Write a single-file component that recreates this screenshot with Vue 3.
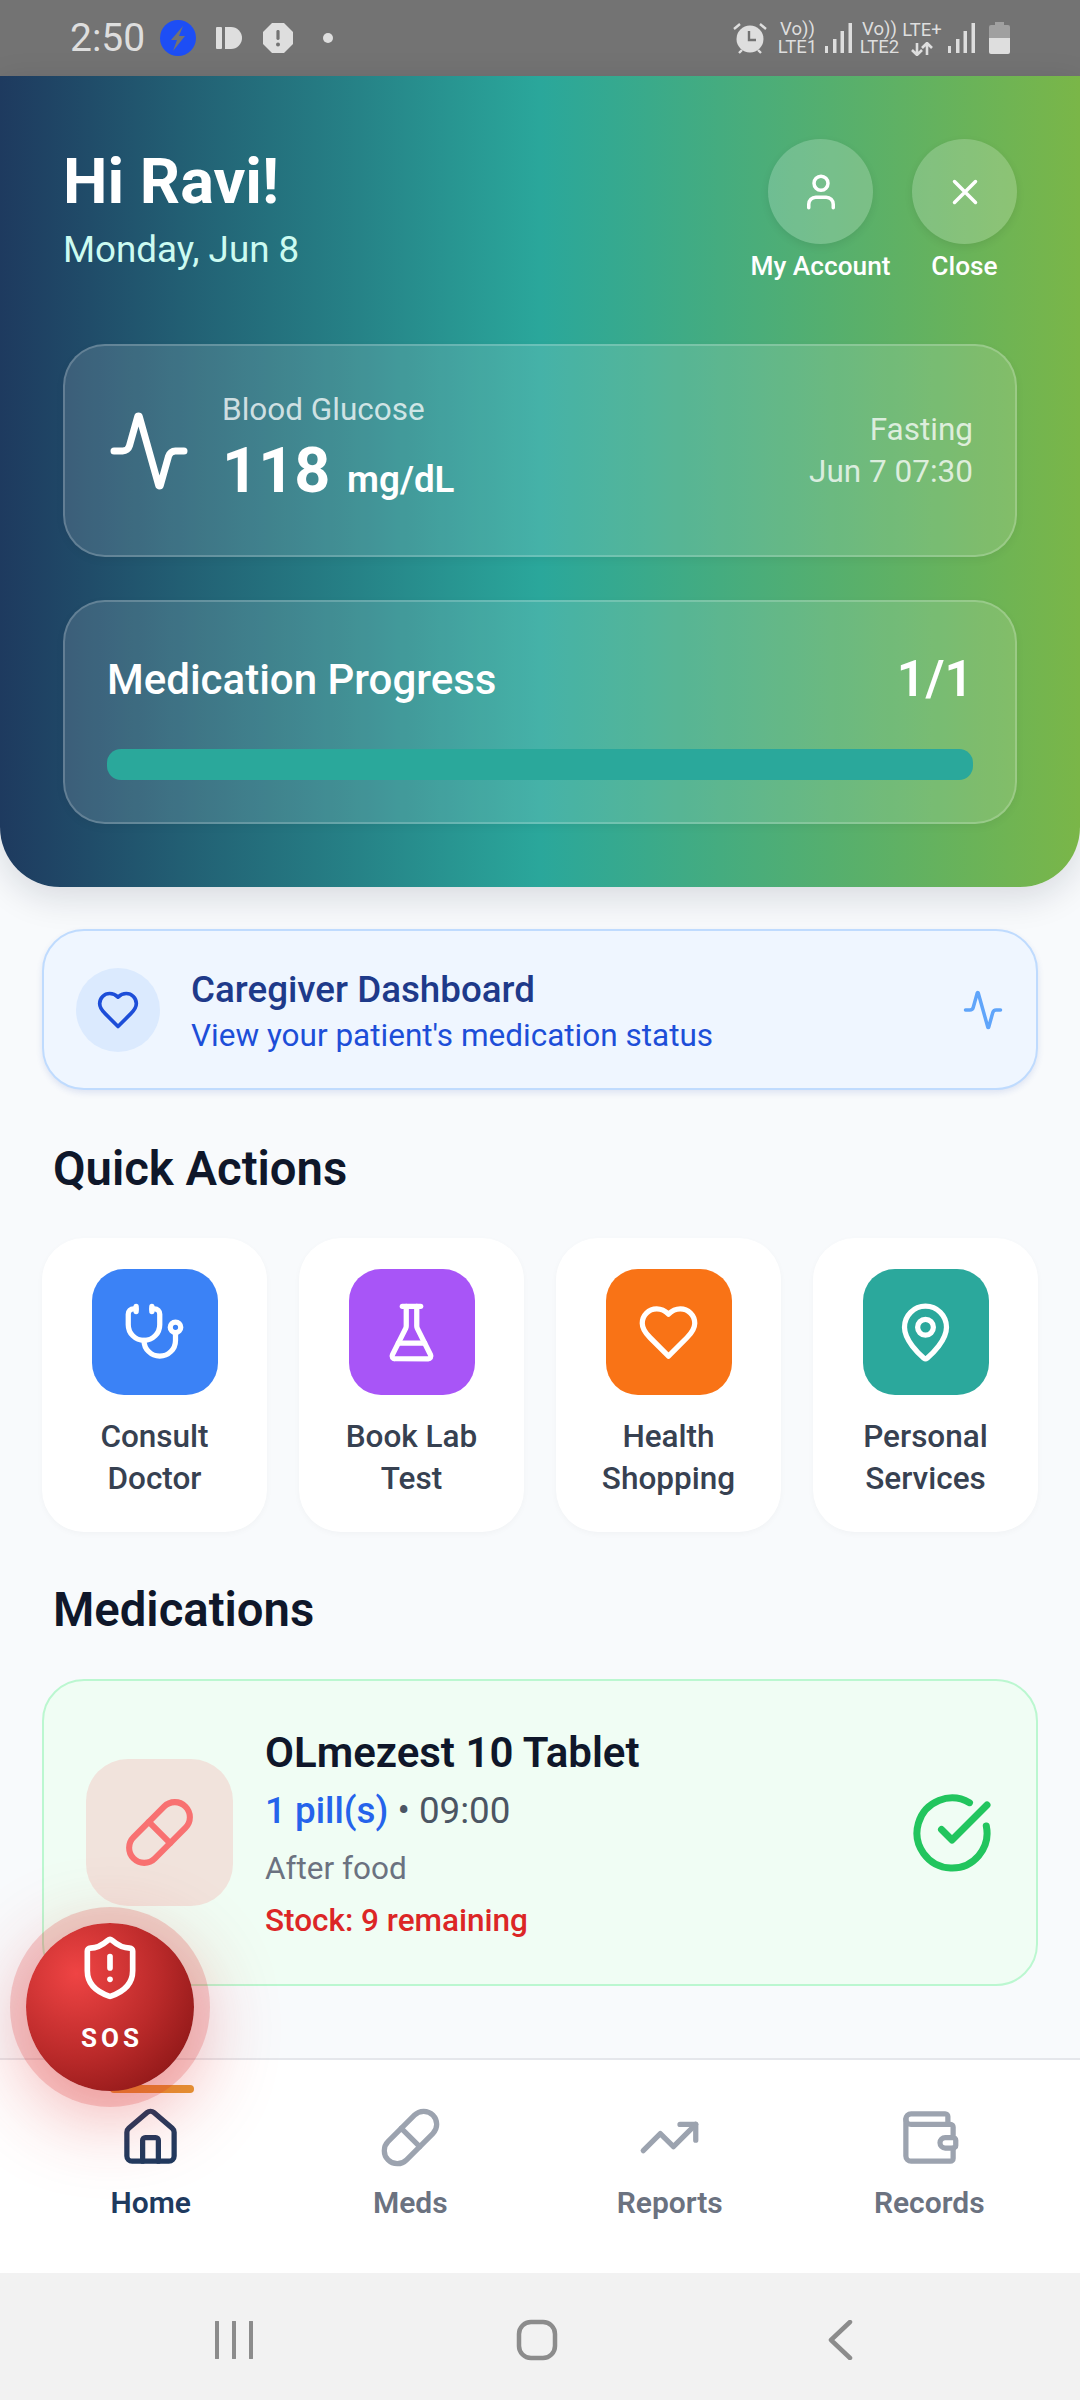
<template>
  <div class="screen">
    <div class="status">
      <div class="status-left">
        <span class="time">2:50</span>
        <svg class="st-bolt" viewBox="0 0 36 36">
          <circle cx="18" cy="18" r="18" fill="#1d4ef5" />
          <path d="M23 6 11 20h6l-4 11 12-15h-6z" fill="#737373" />
        </svg>
        <svg class="st-id" viewBox="0 0 26 22">
          <rect x="0" y="0" width="6" height="22" rx="1" fill="#dedede" />
          <path d="M9 0h6a11 11 0 0 1 0 22H9z" fill="#dedede" />
        </svg>
        <svg class="st-warn" viewBox="0 0 30 30">
          <path d="M9 0h12l9 9v12l-9 9H9l-9-9V9z" fill="#dedede" />
          <rect x="13.4" y="7" width="3.2" height="10" rx="1.4" fill="#737373" />
          <circle cx="15" cy="21.5" r="2" fill="#737373" />
        </svg>
        <span class="st-dot"></span>
      </div>
      <div class="status-right">
        <svg class="st-alarm" viewBox="0 0 34 32">
          <circle cx="17" cy="17" r="13.5" fill="#dedede" />
          <path d="M16 9v9h7" fill="none" stroke="#737373" stroke-width="2.4" />
          <path d="M1 7l6-5M33 7l-6-5M6 31l3-3M28 31l-3-3" stroke="#dedede" stroke-width="2.4" />
        </svg>
        <div class="st-net st-net1">
          <span>Vo))</span>
          <span>LTE1</span>
        </div>
        <svg class="st-signal" viewBox="0 0 27 30">
          <rect x="0" y="23" width="3" height="7" fill="#dedede" />
          <rect x="8" y="16" width="3.5" height="14" fill="#dedede" />
          <rect x="15.5" y="8" width="3.5" height="22" fill="#dedede" />
          <rect x="23.5" y="0" width="3.5" height="30" fill="#dedede" />
        </svg>
        <div class="st-net st-net2">
          <span>Vo))</span>
          <span>LTE2</span>
        </div>
        <div class="st-net st-plus">
          <span>LTE+</span>
          <svg viewBox="0 0 24 14" width="24" height="14">
            <path d="M7 1v11M2 8l5 5 5-5M17 13V2M12 6l5-5 5 5" fill="none" stroke="#dedede" stroke-width="2.6" />
          </svg>
        </div>
        <svg class="st-signal st-signal2" viewBox="0 0 27 30">
          <rect x="0" y="23" width="3" height="7" fill="#dedede" />
          <rect x="8" y="16" width="3.5" height="14" fill="#dedede" />
          <rect x="15.5" y="8" width="3.5" height="22" fill="#dedede" />
          <rect x="23.5" y="0" width="3.5" height="30" fill="#dedede" />
        </svg>
        <svg class="st-batt" viewBox="0 0 21 32">
          <path d="M6 0h9v3h4a2 2 0 0 1 2 2v11H0V5a2 2 0 0 1 2-2h4z" fill="#a0a0a0" />
          <path d="M0 16h21v14a2 2 0 0 1-2 2H2a2 2 0 0 1-2-2z" fill="#dedede" />
        </svg>
      </div>
    </div>

    <header class="hero">
      <div class="hero-top">
        <div>
          <h1 class="hi">Hi Ravi!</h1>
          <p class="date">Monday, Jun 8</p>
        </div>
        <div class="hero-btns">
          <div class="round-wrap">
            <div class="round">
              <svg class="ic" width="42" height="42" viewBox="0 0 24 24">
                <path d="M19 21v-2a4 4 0 0 0-4-4H9a4 4 0 0 0-4 4v2" />
                <circle cx="12" cy="7" r="4" />
              </svg>
            </div>
            <span>My Account</span>
          </div>
          <div class="round-wrap">
            <div class="round">
              <svg class="ic" width="42" height="42" viewBox="0 0 24 24">
                <path d="M18 6 6 18M6 6l12 12" />
              </svg>
            </div>
            <span>Close</span>
          </div>
        </div>
      </div>

      <div class="glass glucose">
        <svg class="ic glucose-ic" width="84" height="84" viewBox="0 0 24 24">
          <path :d="activityPath" />
        </svg>
        <div class="glucose-main">
          <div class="glucose-label">Blood Glucose</div>
          <div class="glucose-val">118 <small>mg/dL</small></div>
        </div>
        <div class="glucose-side">
          <div>Fasting</div>
          <div>Jun 7 07:30</div>
        </div>
      </div>

      <div class="glass progress">
        <div class="progress-row">
          <span>Medication Progress</span>
          <strong>1/1</strong>
        </div>
        <div class="bar"></div>
      </div>
    </header>

    <main class="content">
      <div class="care">
        <div class="care-ic">
          <svg class="ic" width="44" height="44" viewBox="0 0 24 24">
            <path :d="heartPath" />
          </svg>
        </div>
        <div class="care-text">
          <div class="care-title">Caregiver Dashboard</div>
          <div class="care-sub">View your patient's medication status</div>
        </div>
        <svg class="ic care-pulse" width="42" height="42" viewBox="0 0 24 24">
          <path :d="activityPath" />
        </svg>
      </div>

      <h2 class="heading quick-h">Quick Actions</h2>
      <div class="actions">
        <div v-for="a in actions" :key="a.line1" class="action">
          <div class="action-ic" :style="{ background: a.color }">
            <svg class="ic" width="63" height="63" viewBox="0 0 24 24">
              <path v-for="d in a.paths" :key="d" :d="d" />
              <circle v-if="a.circle" :cx="a.circle[0]" :cy="a.circle[1]" :r="a.circle[2]" />
            </svg>
          </div>
          <div class="action-label">{{ a.line1 }}<br />{{ a.line2 }}</div>
        </div>
      </div>

      <h2 class="heading meds-h">Medications</h2>
      <div class="med">
        <div class="med-ic">
          <svg class="ic" width="73" height="73" viewBox="0 0 24 24">
            <path v-for="d in pillPaths" :key="d" :d="d" />
          </svg>
        </div>
        <div class="med-text">
          <div class="med-name">OLmezest 10 Tablet</div>
          <div class="med-dose"><span>1 pill(s)</span> • 09:00</div>
          <div class="med-note">After food</div>
          <div class="med-stock">Stock: 9 remaining</div>
        </div>
        <svg class="ic med-check" width="84" height="84" viewBox="0 0 24 24">
          <path d="M21.801 10A10 10 0 1 1 17 3.335" />
          <path d="m9 11 3 3L22 4" />
        </svg>
      </div>
    </main>

    <nav class="nav">
      <div v-for="(n, i) in navItems" :key="n.label" class="nav-item" :class="{ active: i === 0 }">
        <span v-if="i === 0" class="nav-mark"></span>
        <svg class="ic" width="63" height="63" viewBox="0 0 24 24">
          <path v-for="d in n.paths" :key="d" :d="d" />
        </svg>
        <span class="nav-label">{{ n.label }}</span>
      </div>
    </nav>

    <div class="sysbar">
      <svg width="38" height="38" viewBox="0 0 38 38">
        <path d="M2 1v36M19 1v36M36 1v36" fill="none" stroke="#8c8c8c" stroke-width="4" stroke-linecap="round" />
      </svg>
      <svg width="42" height="42" viewBox="0 0 42 42">
        <rect x="3" y="3" width="36" height="36" rx="12" fill="none" stroke="#8c8c8c" stroke-width="4.5" />
      </svg>
      <svg width="26" height="40" viewBox="0 0 26 40">
        <path d="M23 2 4 20l19 18" fill="none" stroke="#8c8c8c" stroke-width="4.5" stroke-linecap="round" stroke-linejoin="round" />
      </svg>
    </div>

    <div class="sos">
      <svg class="ic" width="68" height="68" viewBox="0 0 24 24">
        <path d="M20 13c0 5-3.5 7.5-7.66 8.95a1 1 0 0 1-.67-.01C7.5 20.5 4 18 4 13V6a1 1 0 0 1 1-1c2 0 4.5-1.2 6.24-2.72a1.17 1.17 0 0 1 1.52 0C14.51 3.81 17 5 19 5a1 1 0 0 1 1 1z" />
        <path d="M12 8v4" />
        <path d="M12 16h.01" />
      </svg>
      <span>SOS</span>
    </div>
  </div>
</template>

<script setup>
const activityPath = 'M22 12h-2.48a2 2 0 0 0-1.93 1.46l-2.35 8.36a.25.25 0 0 1-.48 0L9.24 2.18a.25.25 0 0 0-.48 0l-2.35 8.36A2 2 0 0 1 4.49 12H2'
const heartPath = 'M19 14c1.49-1.46 3-3.21 3-5.5A5.5 5.5 0 0 0 16.5 3c-1.76 0-3 .5-4.5 2-1.5-1.5-2.74-2-4.5-2A5.5 5.5 0 0 0 2 8.5c0 2.3 1.5 4.05 3 5.5l7 7Z'
const pillPaths = [
  'm10.5 20.5 10-10a4.95 4.95 0 1 0-7-7l-10 10a4.95 4.95 0 1 0 7 7Z',
  'm8.5 8.5 7 7'
]

const actions = [
  {
    line1: 'Consult',
    line2: 'Doctor',
    color: '#3b82f6',
    paths: [
      'M11 2v2',
      'M5 2v2',
      'M5 3H4a2 2 0 0 0-2 2v4a6 6 0 0 0 12 0V5a2 2 0 0 0-2-2h-1',
      'M8 15a6 6 0 0 0 12 0v-3'
    ],
    circle: [20, 10, 2]
  },
  {
    line1: 'Book Lab',
    line2: 'Test',
    color: '#a855f7',
    paths: [
      'M10 2v7.527a2 2 0 0 1-.211.896L4.72 20.55a1 1 0 0 0 .9 1.45h12.76a1 1 0 0 0 .9-1.45l-5.069-10.127A2 2 0 0 1 14 9.527V2',
      'M8.5 2h7',
      'M7 16h10'
    ]
  },
  {
    line1: 'Health',
    line2: 'Shopping',
    color: '#f97316',
    paths: [heartPath]
  },
  {
    line1: 'Personal',
    line2: 'Services',
    color: '#2ba89c',
    paths: ['M20 10c0 4.993-5.539 10.193-7.399 11.799a1 1 0 0 1-1.202 0C9.539 20.193 4 14.993 4 10a8 8 0 0 1 16 0'],
    circle: [12, 10, 3]
  }
]

const navItems = [
  {
    label: 'Home',
    paths: [
      'M15 21v-8a1 1 0 0 0-1-1h-4a1 1 0 0 0-1 1v8',
      'M3 10a2 2 0 0 1 .709-1.528l7-5.999a2 2 0 0 1 2.582 0l7 5.999A2 2 0 0 1 21 10v9a2 2 0 0 1-2 2H5a2 2 0 0 1-2-2z'
    ]
  },
  { label: 'Meds', paths: pillPaths },
  { label: 'Reports', paths: ['M22 7 13.5 15.5l-5-5L2 17', 'M16 7h6v6'] },
  {
    label: 'Records',
    paths: [
      'M19 7V4a1 1 0 0 0-1-1H5a2 2 0 0 0 0 4h15a1 1 0 0 1 1 1v4h-3a2 2 0 0 0 0 4h3a1 1 0 0 0 1-1v-2a1 1 0 0 0-1-1',
      'M3 5v14a2 2 0 0 0 2 2h15a1 1 0 0 0 1-1v-4'
    ]
  }
]
</script>

<style>
html, body {
  margin: 0;
  background: #f8fafc;
}
</style>

<style scoped>
.screen {
  position: relative;
  width: 1080px;
  height: 2400px;
  overflow: hidden;
  display: flex;
  flex-direction: column;
  background: #f8fafc;
  font-family: Roboto, "Noto Sans", sans-serif;
}
.ic {
  display: block;
  flex: none;
  fill: none;
  stroke: currentColor;
  stroke-width: 2;
  stroke-linecap: round;
  stroke-linejoin: round;
}

.status {
  height: 76px;
  flex: none;
  background: #737373;
  display: flex;
  justify-content: space-between;
  align-items: center;
  padding: 0 70px 0 70px;
  color: #dedede;
}
.status-left {
  display: flex;
  align-items: center;
}
.time {
  font-size: 39px;
  line-height: 44px;
  width: 90px;
}
.st-bolt {
  width: 36px;
  height: 36px;
  margin-right: 20px;
}
.st-id {
  width: 26px;
  height: 22px;
  margin-right: 21px;
}
.st-warn {
  width: 30px;
  height: 30px;
  margin-right: 30px;
}
.st-dot {
  width: 10px;
  height: 10px;
  border-radius: 50%;
  background: #dedede;
}
.status-right {
  display: flex;
  align-items: center;
}
.st-alarm {
  width: 34px;
  height: 32px;
  margin-right: 11px;
}
.st-net {
  display: flex;
  flex-direction: column;
  align-items: center;
  font-size: 18.5px;
  line-height: 18px;
  white-space: nowrap;
}
.st-net1 {
  width: 39px;
  margin-right: 8px;
}
.st-signal {
  width: 27px;
  height: 30px;
  margin-right: 7px;
}
.st-net2 {
  width: 41px;
  margin-right: 4px;
}
.st-plus {
  width: 36px;
  margin-right: 8px;
}
.st-plus svg {
  display: block;
  margin-top: 3px;
}
.st-signal2 {
  margin-right: 14px;
}
.st-batt {
  width: 21px;
  height: 32px;
}

.hero {
  height: 811px;
  flex: none;
  box-sizing: border-box;
  padding: 63px 63px 0;
  background: linear-gradient(90deg, #1e3a5f 0%, #2aa79b 50%, #7ab648 100%);
  border-radius: 0 0 60px 60px;
  box-shadow: 0 10px 36px rgba(15, 23, 42, 0.14);
  color: #fff;
}
.hero-top {
  height: 205px;
  display: flex;
  justify-content: space-between;
}
.hi {
  margin: 7px 0 0;
  font-size: 63px;
  line-height: 72px;
  font-weight: 700;
}
.date {
  margin: 9px 0 0;
  font-size: 36.75px;
  line-height: 46px;
  color: #ccfbf1;
}
.hero-btns {
  display: flex;
  gap: 39px;
}
.round-wrap {
  width: 105px;
  display: flex;
  flex-direction: column;
  align-items: center;
}
.round-wrap span {
  margin-top: 6px;
  font-size: 26.25px;
  line-height: 32px;
  font-weight: 500;
  white-space: nowrap;
}
.round {
  width: 105px;
  height: 105px;
  border-radius: 50%;
  background: rgba(255, 255, 255, 0.2);
  box-shadow: 0 3px 8px rgba(0, 0, 0, 0.08);
  display: flex;
  align-items: center;
  justify-content: center;
}

.glass {
  box-sizing: border-box;
  border: 2px solid rgba(255, 255, 255, 0.2);
  background: rgba(255, 255, 255, 0.13);
  border-radius: 42px;
  box-shadow: 0 3px 8px rgba(0, 0, 0, 0.05);
}
.glucose {
  height: 213px;
  display: flex;
  padding: 0 42px;
}
.glucose-ic {
  margin: 63px 0 0 0;
}
.glucose-main {
  margin-left: 31px;
  padding-top: 42px;
}
.glucose-label {
  font-size: 31.5px;
  line-height: 44px;
  color: rgba(255, 255, 255, 0.75);
}
.glucose-val {
  margin-top: 3px;
  font-size: 63px;
  line-height: 72px;
  font-weight: 700;
  white-space: nowrap;
}
.glucose-val small {
  margin-left: 1px;
  font-size: 36.75px;
  font-weight: 600;
}
.glucose-side {
  margin-left: auto;
  padding-top: 63px;
  text-align: right;
  font-size: 31.5px;
  line-height: 42px;
  color: rgba(255, 255, 255, 0.75);
}
.progress {
  height: 224px;
  margin-top: 43px;
  padding: 0 42px;
}
.progress-row {
  display: flex;
  justify-content: space-between;
  align-items: center;
  height: 60px;
  margin-top: 47px;
  font-size: 42px;
  font-weight: 500;
}
.progress-row strong {
  font-size: 50px;
  font-weight: 600;
}
.bar {
  height: 31px;
  margin-top: 40px;
  border-radius: 14px;
  background: #2aa89b;
}

.content {
  flex: 1;
  padding: 42px 42px 0;
  min-height: 0;
}
.care {
  box-sizing: border-box;
  height: 161px;
  display: flex;
  align-items: center;
  padding: 0 32px 0 32px;
  background: #eff6ff;
  border: 2px solid #bfdbfe;
  border-radius: 42px;
  box-shadow: 0 3px 6px rgba(30, 64, 175, 0.12);
}
.care-ic {
  width: 84px;
  height: 84px;
  flex: none;
  border-radius: 50%;
  background: #dbeafe;
  color: #1d4ed8;
  display: flex;
  align-items: center;
  justify-content: center;
}
.care-text {
  margin-left: 31px;
  flex: 1;
}
.care-title {
  font-size: 36.75px;
  line-height: 50px;
  font-weight: 500;
  color: #1e3a8a;
  padding-top: 3px;
}
.care-sub {
  font-size: 31.5px;
  line-height: 42px;
  color: #1d4ed8;
}
.care-pulse {
  color: #60a5fa;
}

.heading {
  margin: 0;
  padding-left: 11px;
  font-size: 47.25px;
  line-height: 63px;
  font-weight: 600;
  color: #0f172a;
}
.quick-h {
  margin-top: 48px;
}
.actions {
  margin-top: 37px;
  display: grid;
  grid-template-columns: repeat(4, 1fr);
  gap: 32px;
}
.action {
  box-sizing: border-box;
  height: 294px;
  padding-top: 31px;
  background: #fff;
  border-radius: 42px;
  box-shadow: 0 2px 6px rgba(15, 23, 42, 0.03);
  display: flex;
  flex-direction: column;
  align-items: center;
}
.action-ic {
  width: 126px;
  height: 126px;
  border-radius: 32px;
  color: #fff;
  display: flex;
  align-items: center;
  justify-content: center;
}
.action-label {
  margin-top: 21px;
  font-size: 31.5px;
  line-height: 42px;
  font-weight: 500;
  text-align: center;
  color: #374151;
}
.meds-h {
  margin-top: 47px;
}
.med {
  box-sizing: border-box;
  height: 307px;
  margin-top: 37px;
  display: flex;
  align-items: center;
  padding: 0 42px 0 42px;
  background: #f0fdf4;
  border: 2px solid #bbf7d0;
  border-radius: 42px;
}
.med-ic {
  width: 147px;
  height: 147px;
  flex: none;
  border-radius: 42px;
  background: rgba(248, 113, 113, 0.18);
  color: #f87171;
  display: flex;
  align-items: center;
  justify-content: center;
}
.med-text {
  flex: 1;
  margin-left: 32px;
  padding-top: 3px;
}
.med-name {
  font-size: 42px;
  line-height: 55px;
  font-weight: 600;
  color: #0f172a;
}
.med-dose {
  margin-top: 6px;
  font-size: 36.75px;
  line-height: 50px;
  color: #4b5563;
}
.med-dose span {
  color: #2563eb;
  font-weight: 500;
}
.med-note {
  margin-top: 11px;
  font-size: 31.5px;
  line-height: 44px;
  color: #6b7280;
}
.med-stock {
  margin-top: 8px;
  font-size: 31.5px;
  line-height: 44px;
  font-weight: 500;
  color: #dc2626;
}
.med-check {
  color: #22c55e;
}

.nav {
  position: relative;
  height: 215px;
  flex: none;
  box-sizing: border-box;
  padding: 0 21px;
  background: #fff;
  border-top: 2px solid #e5e7eb;
  display: grid;
  grid-template-columns: repeat(4, 1fr);
}
.nav-item {
  position: relative;
  display: flex;
  flex-direction: column;
  align-items: center;
  padding-top: 46px;
  color: #9ca3af;
}
.nav-item.active {
  color: #1e3a5f;
}
.nav-mark {
  position: absolute;
  top: 25px;
  left: 89px;
  width: 84px;
  height: 8px;
  border-radius: 4px;
  background: #e59a34;
}
.nav-label {
  margin-top: 14px;
  font-size: 30px;
  line-height: 40px;
  font-weight: 600;
  color: #6b7280;
}
.nav-item.active .nav-label {
  color: #1e3a5f;
}
.sysbar {
  height: 127px;
  flex: none;
  box-sizing: border-box;
  background: #f2f2f2;
  display: grid;
  grid-template-columns: repeat(3, 1fr);
  justify-items: center;
  align-items: center;
  padding: 6px 89px 0 82px;
}

.sos {
  position: absolute;
  left: 26px;
  top: 1923px;
  width: 168px;
  height: 168px;
  border-radius: 50%;
  background: radial-gradient(circle at 30% 30%, #ef4444 0%, #bb2a2a 50%, #7a0f0f 100%);
  box-shadow: 0 0 0 16px rgba(220, 38, 38, 0.2), 0 21px 84px rgba(220, 38, 38, 0.42);
  color: #fff;
  display: flex;
  flex-direction: column;
  align-items: center;
  padding-top: 11px;
  box-sizing: border-box;
}
.sos span {
  margin-top: 21px;
  font-size: 26px;
  line-height: 30px;
  font-weight: 700;
  letter-spacing: 4px;
  margin-right: -4px;
}
</style>
